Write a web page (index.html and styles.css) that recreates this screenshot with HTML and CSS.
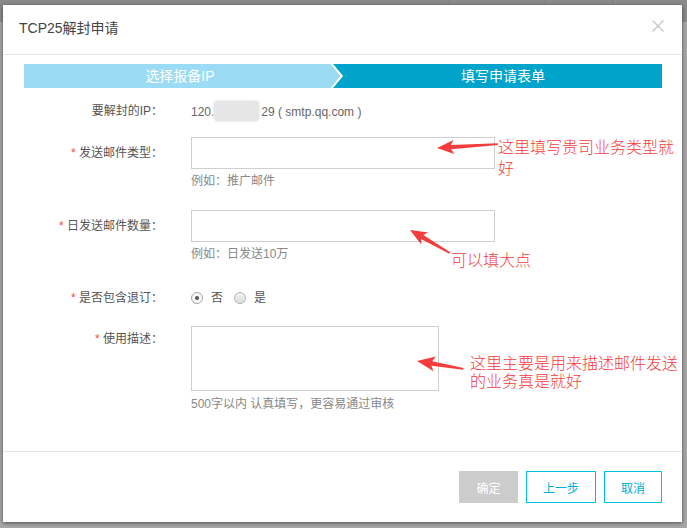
FILE: index.html
```html
<!DOCTYPE html>
<html lang="zh-CN">
<head>
<meta charset="utf-8">
<title>TCP25解封申请</title>
<link rel="stylesheet" href="styles.css">
</head>
<body>
<div class="topbar">
  <div class="tb-item tb-search">
    <svg class="tb-icon" width="12" height="12" viewBox="0 0 12 12"><circle cx="5" cy="5" r="3.8" fill="none" stroke="#e8e8e8" stroke-width="1.6"/><line x1="7.8" y1="7.8" x2="11" y2="11" stroke="#e8e8e8" stroke-width="1.8"/></svg>
    <span>搜索</span>
  </div>
  <div class="tb-item tb-msg"><span>消息</span><span class="badge">449</span></div>
  <div class="tb-item tb-fee">费用</div>
  <div class="tb-item tb-ticket">工单</div>
</div>

<div class="modal">
  <div class="modal-header">
    <span class="modal-title">TCP25解封申请</span>
    <svg class="close" width="12" height="12" viewBox="0 0 12 12"><path d="M0.5 0.5 L11.5 11.5 M11.5 0.5 L0.5 11.5" stroke="#c6c6c6" stroke-width="1.4" fill="none"/></svg>
  </div>

  <div class="steps">
    <div class="step step-done">选择报备IP</div>
    <svg class="step-sep" width="14" height="24" viewBox="0 0 14 24" preserveAspectRatio="none">
      <rect x="0" y="0" width="14" height="24" fill="#00a3c9"/>
      <polygon points="0,0 1,0 11.5,12 1,24 0,24" fill="#9bdcf4"/>
      <polyline points="1.3,-0.6 11.8,12 1.3,24.6" fill="none" stroke="#ffffff" stroke-width="2"/>
    </svg>
    <div class="step step-active">填写申请表单</div>
  </div>

  <div class="form">
    <div class="row row-ip">
      <div class="label">要解封的IP：</div>
      <div class="value">120.<span class="blur"></span>29 ( smtp.qq.com )</div>
    </div>

    <div class="row row-type">
      <div class="label label-field"><span class="req">*</span> 发送邮件类型：</div>
      <div class="field">
        <input class="input" type="text">
        <div class="hint hint-input">例如：推广邮件</div>
      </div>
    </div>

    <div class="row row-count">
      <div class="label label-field"><span class="req">*</span> 日发送邮件数量：</div>
      <div class="field">
        <input class="input" type="text">
        <div class="hint hint-input">例如：日发送10万</div>
      </div>
    </div>

    <div class="row row-radio">
      <div class="label"><span class="req">*</span> 是否包含退订：</div>
      <div class="value radios">
        <span class="radio radio-on"></span><span class="radio-text">否</span>
        <span class="radio"></span><span class="radio-text">是</span>
      </div>
    </div>

    <div class="row row-desc">
      <div class="label label-area"><span class="req">*</span> 使用描述：</div>
      <div class="field">
        <textarea class="textarea"></textarea>
        <div class="hint hint-area">500字以内 认真填写，更容易通过审核</div>
      </div>
    </div>
  </div>

  <div class="footer">
    <button class="btn btn-disabled btn-ok">确定</button>
    <button class="btn btn-line btn-prev">上一步</button>
    <button class="btn btn-line btn-cancel">取消</button>
  </div>
</div>

<svg class="arrows" width="687" height="528" viewBox="0 0 687 528">
  <g fill="#f53c3c">
    <polygon transform="translate(437 148) rotate(-3.7)" points="0,0 17,-7 14,-2.2 61,-0.8 61,0.9 14,2.2 17,7"/>
    <polygon transform="translate(410 230) rotate(30)" points="0,0 17,-7 14,-2.2 46,-0.8 46,0.9 14,2.2 17,7"/>
    <polygon transform="translate(417 361) rotate(9.5)" points="0,0 18,-7.5 15,-2.3 47,-0.8 47,0.9 15,2.3 18,7.5"/>
  </g>
</svg>
<div class="note note1"><div class="note-line">这里填写贵司业务类型就</div><div class="note-line">好</div></div>
<div class="note note2"><div class="note-line">可以填大点</div></div>
<div class="note note3"><div class="note-line">这里主要是用来描述邮件发送</div><div class="note-line">的业务真是就好</div></div>
</body>
</html>
```

FILE: styles.css
```css
* { box-sizing: border-box; }

html, body {
  margin: 0;
  padding: 0;
}

body {
  width: 687px;
  height: 528px;
  overflow: hidden;
  position: relative;
  background: #a7a7a7;
  font-family: "Liberation Sans", "Noto Sans CJK SC", sans-serif;
  font-size: 12px;
  color: #555;
}

/* dimmed page top bar */
.topbar {
  height: 22px;
  background: #8b8b8b;
  display: flex;
  justify-content: flex-end;
  align-items: center;
  color: #e8e8e8;
  font-size: 16px;
}
.tb-item {
  display: flex;
  align-items: center;
  height: 22px;
  border-left: 1px solid #7e7e7e;
  padding-top: 6px;
}
.tb-search { width: 71px; border-left: none; gap: 4px; }
.tb-icon { margin-top: -2px; }
.tb-msg { width: 96px; padding-left: 16px; gap: 8px; }
.tb-fee { width: 67px; padding-left: 16px; }
.tb-ticket { width: 75px; padding-left: 30px; }
.badge {
  background: #f3a83b;
  color: #fff;
  font-size: 12px;
  padding: 0 6px;
  border-radius: 2px;
}

/* modal */
.modal {
  position: absolute;
  left: 3px;
  top: 5px;
  width: 679px;
  height: 517px;
  background: #fff;
  box-shadow: 0 1px 4px rgba(0, 0, 0, 0.55);
  display: flex;
  flex-direction: column;
}

.modal-header {
  height: 50px;
  border-bottom: 1px solid #e5e5e5;
  display: flex;
  align-items: center;
  justify-content: space-between;
  padding: 0 18px 4px 16px;
}
.modal-title {
  font-size: 14px;
  color: #444;
  line-height: 20px;
}
.close { margin-top: -3px; }

.steps {
  margin: 9px 20px 0 21px;
  height: 24px;
  display: flex;
}
.step {
  height: 24px;
  line-height: 24px;
  color: #fff;
  font-size: 14px;
  text-align: center;
  white-space: nowrap;
}
.step-done {
  width: 306px;
  background: #9bdcf4;
  padding-left: 6px;
}
.step-sep { display: block; flex: none; }
.step-active {
  flex: 1;
  background: #00a3c9;
}

/* form */
.form {
  flex: 1;
  display: flex;
  flex-direction: column;
}
.row {
  display: flex;
  align-items: flex-start;
}
.label {
  width: 160px;
  flex: none;
  text-align: right;
  line-height: 20px;
  color: #555;
  white-space: nowrap;
}
.req {
  color: #f0504a;
}
.value, .field {
  margin-left: 28px;
}
.value {
  line-height: 20px;
  color: #666;
  white-space: nowrap;
}
.blur {
  display: inline-block;
  width: 45px;
  height: 20px;
  margin: 0 2px 0 0;
  vertical-align: -5px;
  background: #e6e6e6;
  border-radius: 4px;
  box-shadow: 0 0 2px 1px #ededed;
}

.row-ip { margin-top: 13px; }
.row-type { margin-top: 15px; }
.row-count { margin-top: 20px; }
.row-radio { margin-top: 25px; }
.row-desc { margin-top: 18px; }

.label-field { line-height: 32px; }
.label-area { line-height: 20px; padding-top: 3px; }

.input {
  display: block;
  width: 304px;
  height: 32px;
  border: 1px solid #cfcfcf;
  margin: 0;
  padding: 0 6px;
  font: inherit;
  outline: none;
}
.textarea {
  display: block;
  width: 248px;
  height: 65px;
  border: 1px solid #cfcfcf;
  margin: 0;
  padding: 4px 6px;
  font: inherit;
  resize: none;
  outline: none;
}
.hint {
  line-height: 18px;
  color: #888;
  white-space: nowrap;
}
.hint-input { margin-top: 3px; }
.hint-area { margin-top: 4px; }

.radios {
  display: flex;
  align-items: center;
  height: 20px;
}
.radio {
  width: 12px;
  height: 12px;
  border-radius: 50%;
  border: 1px solid #b5b5b5;
  background: linear-gradient(#f4f4f4, #dcdcdc);
  margin-right: 8px;
  position: relative;
}
.radio-on {
  background: #f8f8f8;
  border-color: #a8a8a8;
}
.radio-on::after {
  content: "";
  position: absolute;
  left: 3px;
  top: 3px;
  width: 4px;
  height: 4px;
  border-radius: 50%;
  background: #555;
}
.radio-text {
  margin-right: 11px;
  color: #555;
}

/* footer */
.footer {
  border-top: 1px solid #e5e5e5;
  height: 71px;
  padding: 19px 20px 0 0;
  display: flex;
  justify-content: flex-end;
  align-items: flex-start;
}
.btn {
  height: 32px;
  margin: 0 0 0 8px;
  padding: 0;
  font: inherit;
  font-size: 12px;
  background: #fff;
  cursor: pointer;
}
.btn-ok { width: 59px; margin-left: 0; }
.btn-prev { width: 70px; }
.btn-cancel { width: 58px; }
.btn-disabled {
  background: #cccccc;
  border: none;
  color: #fff;
}
.btn-line {
  border: 1px solid #00c1de;
  color: #00aed6;
}

/* screenshot annotations */
.arrows {
  position: absolute;
  left: 0;
  top: 0;
  pointer-events: none;
}
.note {
  position: absolute;
  color: #f53c3c;
  font-family: "Noto Sans CJK SC", sans-serif;
  font-size: 16px;
  font-weight: 300;
  white-space: nowrap;
}
.note-line { height: 20px; line-height: 20px; overflow: visible; }
.note1 { left: 498px; top: 136px; }
.note1 .note-line + .note-line { margin-top: 1px; }
.note2 { left: 451px; top: 249px; }
.note3 { left: 470px; top: 352px; }
.note3 .note-line { height: 18px; }
```
